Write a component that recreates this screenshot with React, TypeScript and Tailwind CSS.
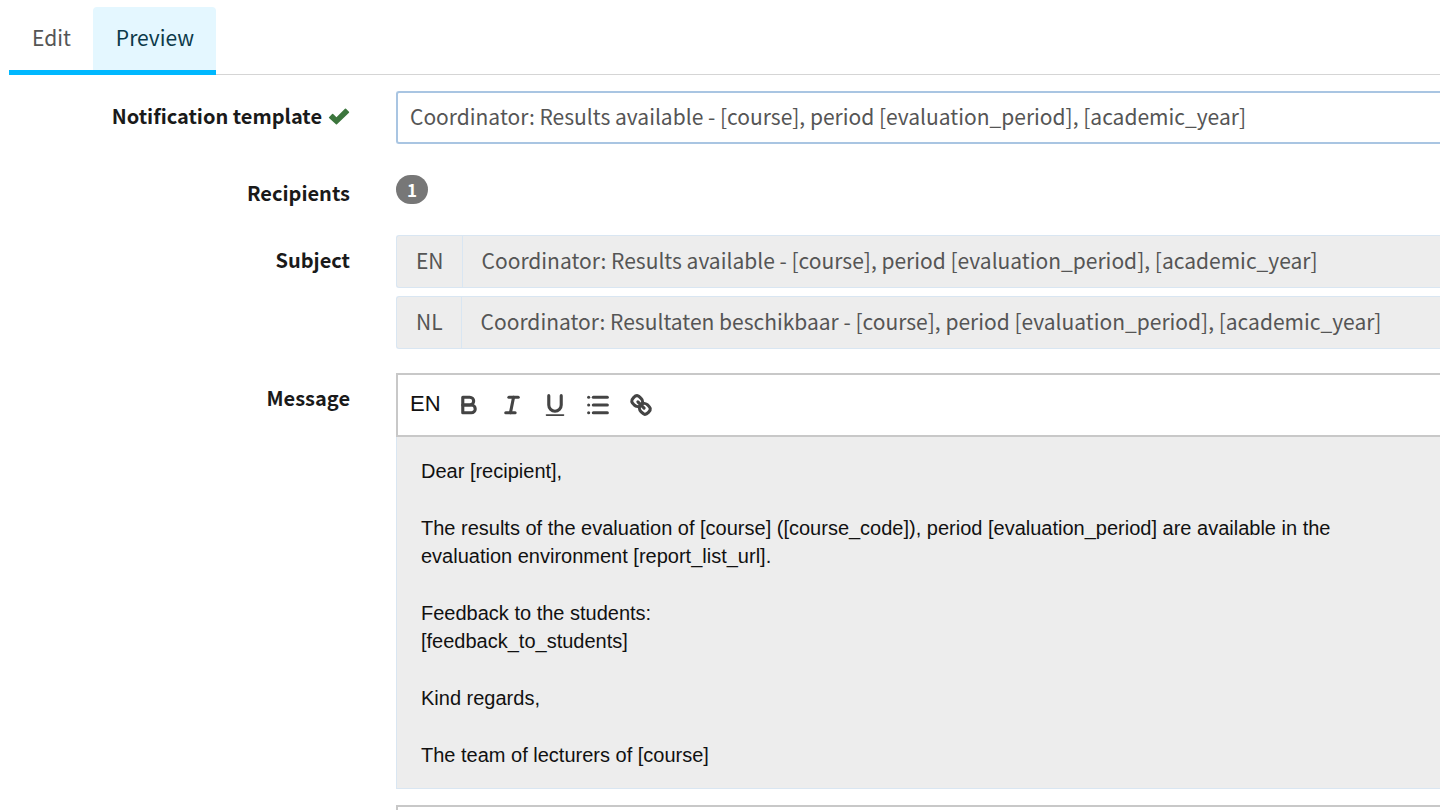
import type { ReactNode } from "react";

const template = "Coordinator: Results available - [course], period [evaluation_period], [academic_year]";

const subjects = [
  { lang: "EN", text: template },
  { lang: "NL", text: "Coordinator: Resultaten beschikbaar - [course], period [evaluation_period], [academic_year]" },
];

const message = `Dear [recipient],

The results of the evaluation of [course] ([course_code]), period [evaluation_period] are available in the evaluation environment [report_list_url].

Feedback to the students:
[feedback_to_students]

Kind regards,

The team of lecturers of [course]`;

const tools: { name: string; icon: ReactNode }[] = [
  {
    name: "Bold",
    icon: (
      <>
        <path d="M5,4H9.5A2.5,2.5,0,0,1,12,6.5v0A2.5,2.5,0,0,1,9.5,9H5V4Z" />
        <path d="M5,9h5.5A2.5,2.5,0,0,1,13,11.5v0A2.5,2.5,0,0,1,10.5,14H5V9Z" />
      </>
    ),
  },
  {
    name: "Italic",
    icon: (
      <>
        <line x1="7" x2="13" y1="4" y2="4" />
        <line x1="5" x2="11" y1="14" y2="14" />
        <line x1="8" x2="10" y1="14" y2="4" />
      </>
    ),
  },
  {
    name: "Underline",
    icon: (
      <>
        <path d="M5,3V9a4.012,4.012,0,0,0,4,4H9a4.012,4.012,0,0,0,4-4V3" />
        <rect x="3" y="15" width="12" height="1" rx="0.5" fill="currentColor" stroke="none" />
      </>
    ),
  },
  {
    name: "Bullet list",
    icon: (
      <>
        <line x1="6" x2="15" y1="4" y2="4" />
        <line x1="6" x2="15" y1="9" y2="9" />
        <line x1="6" x2="15" y1="14" y2="14" />
        <line x1="3" x2="3" y1="4" y2="4" />
        <line x1="3" x2="3" y1="9" y2="9" />
        <line x1="3" x2="3" y1="14" y2="14" />
      </>
    ),
  },
  {
    name: "Link",
    icon: (
      <>
        <line x1="7" x2="11" y1="7" y2="11" />
        <path d="M8.9,4.577a3.476,3.476,0,0,1,.36,4.679A3.476,3.476,0,0,1,4.577,8.9C3.185,7.5,2.035,6.4,4.217,4.217S7.5,3.185,8.9,4.577Z" />
        <path d="M13.423,9.1a3.476,3.476,0,0,0-4.679-.36,3.476,3.476,0,0,0,.36,4.679c1.392,1.392,2.5,2.542,4.679.36S14.815,10.5,13.423,9.1Z" />
      </>
    ),
  },
];

function Row({ label, children }: { label: ReactNode; children: ReactNode }) {
  return (
    <div className="flex">
      <div className="w-[350px] shrink-0 pt-[9px] text-right text-xl leading-8 font-semibold text-[#1a1a1a]">{label}</div>
      <div className="ml-[46px] min-w-0 flex-1">{children}</div>
    </div>
  );
}

export default function App() {
  return (
    <div className="flex min-h-screen flex-col bg-white font-['Noto_Sans_CJK_JP',sans-serif] text-[21px] leading-8 text-[#555]">
      <nav className="flex pt-[7px] pl-[9px]">
        <a href="#edit" className="border-b-[5px] border-[#00b8ff] pt-[14px] pr-[22px] pb-[17px] pl-[23px]">
          Edit
        </a>
        <a
          href="#preview"
          aria-current="page"
          className="rounded-t-sm border-b-[5px] border-[#00b8ff] bg-[#e4f7ff] pt-[14px] pr-[22px] pb-[17px] pl-[23px] text-[#0c3a4a]"
        >
          Preview
        </a>
        <div className="flex-1 border-b border-[#d5d5d5]" />
      </nav>

      <main className="flex flex-1 flex-col pt-4">
        <Row
          label={
            <label htmlFor="template" className="flex items-center justify-end gap-[6px]">
              Notification template
              <svg viewBox="0 0 20 16" className="h-[17px] w-[22px] fill-[#3c763d]" aria-hidden="true">
                <path d="M0.6 8.6 3.5 5.6Q4 5.2 4.5 5.6L7.6 8.6 15.6 0.7Q16.1 0.3 16.6 0.7L19.4 3.5Q19.8 4 19.4 4.5L8.1 15.3Q7.6 15.7 7.1 15.3L0.6 9.5Q0.2 9 0.6 8.6Z" />
              </svg>
            </label>
          }
        >
          <select
            id="template"
            className="block h-[53px] w-full appearance-none rounded-l-[3px] border-2 border-r-0 border-[#a9c5e2] bg-white px-3 pb-1 text-[#555]"
          >
            <option>{template}</option>
          </select>
        </Row>

        <div className="pt-6">
          <Row label="Recipients">
            <div className="flex pt-[7px]">
              <span className="rounded-full bg-[#777] px-[11px] text-[17px] leading-[29px] font-bold text-white">1</span>
            </div>
          </Row>
        </div>

        <div className="pt-[26px]">
          <Row label="Subject">
            <div className="flex flex-col gap-2">
              {subjects.map(({ lang, text }) => (
                <div key={lang} className="flex h-[53px] rounded-l-[3px] border border-r-0 border-[#d9e6f2] bg-[#ededed]">
                  <label htmlFor={`subject-${lang}`} className="flex items-center border-r border-[#d9e6f2] pr-[18px] pb-1 pl-[19px]">
                    {lang}
                  </label>
                  <input
                    id={`subject-${lang}`}
                    readOnly
                    value={text}
                    className="min-w-0 flex-1 bg-transparent pb-1 pl-[19px] outline-none"
                  />
                </div>
              ))}
            </div>
          </Row>
        </div>

        <div className="flex flex-1 flex-col pt-6">
          <Row label={<label htmlFor="message">Message</label>}>
            <div className="font-['Liberation_Sans',Arial,sans-serif] text-[#111]">
              <div className="flex h-16 items-center border-2 border-r-0 border-[#c8c8c8] pl-3">
                <span className="pr-[7px] pb-[2px] text-[22px]">EN</span>
                {tools.map(({ name, icon }) => (
                  <button key={name} type="button" aria-label={name} className="flex w-[43px] justify-center text-[#444]">
                    <svg
                      viewBox="0 0 18 18"
                      className="size-7 fill-none stroke-current stroke-2"
                      strokeLinecap="round"
                      strokeLinejoin="round"
                    >
                      {icon}
                    </svg>
                  </button>
                ))}
              </div>
              <textarea
                id="message"
                readOnly
                rows={11}
                value={message}
                className="block w-full resize-none border border-t-0 border-r-0 border-[#d9e6f2] bg-[#ededed] px-6 pt-5 pb-[19px] text-xl leading-[1.42] outline-none"
              />
            </div>
          </Row>
          <div className="mt-4 ml-[396px] flex-1 border-t-2 border-l-2 border-[#c8c8c8]" />
        </div>
      </main>
    </div>
  );
}
